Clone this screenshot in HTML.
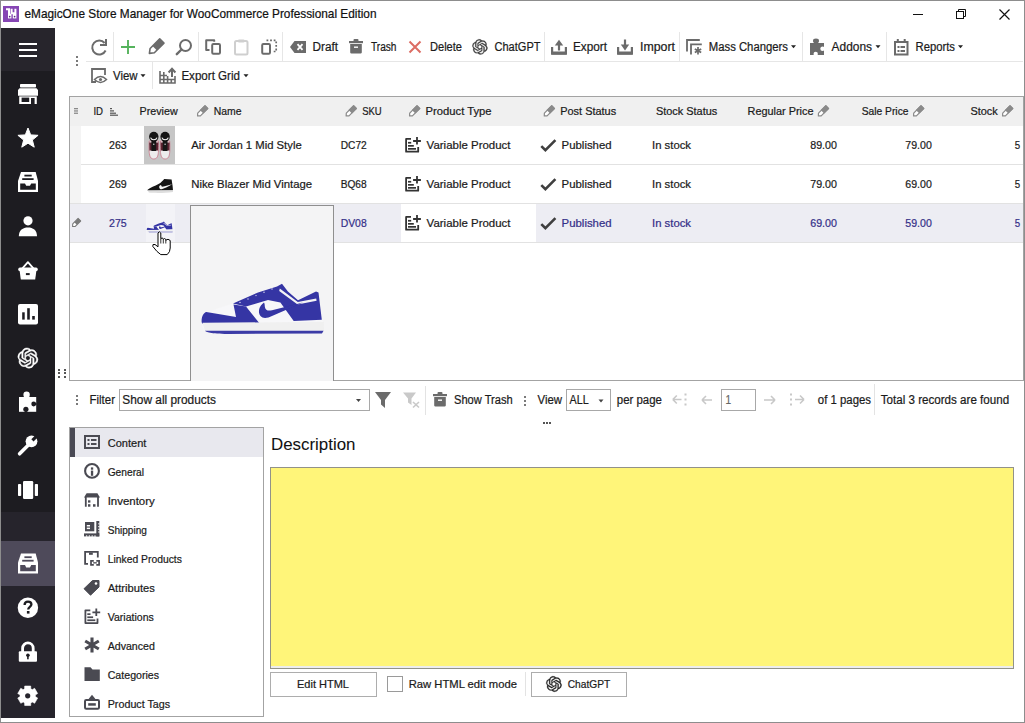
<!DOCTYPE html>
<html><head><meta charset="utf-8"><title>eMagicOne Store Manager</title>
<style>
html,body{margin:0;padding:0;width:1025px;height:723px;overflow:hidden;background:#fff}
body{position:relative;font-family:"Liberation Sans", sans-serif}
svg text{font-family:"Liberation Sans", sans-serif}
</style></head><body>
<div style="position:absolute;left:0px;top:0px;width:1025px;height:723px;background:#ffffff;"></div>
<div style="position:absolute;left:1px;top:28px;width:54px;height:690px;background:#1d1c21;"></div>
<div style="position:absolute;left:1px;top:28px;width:54px;height:43px;background:#27252c;"></div>
<div style="position:absolute;left:1px;top:512px;width:54px;height:206px;background:#26242c;"></div>
<div style="position:absolute;left:1px;top:541px;width:54px;height:45px;background:#4e4a5a;"></div>
<div style="position:absolute;left:0px;top:0px;width:1025px;height:1px;background:#8d8d8d;"></div>
<div style="position:absolute;left:0px;top:0px;width:1px;height:723px;background:#8d8d8d;"></div>
<div style="position:absolute;left:1024px;top:0px;width:1px;height:723px;background:#8d8d8d;"></div>
<div style="position:absolute;left:0px;top:722px;width:1025px;height:1px;background:#8d8d8d;"></div>
<div style="position:absolute;left:3px;top:6px;width:16px;height:16px;background:#8646b4;"></div>
<div style="position:absolute;left:19px;top:43px;width:18px;height:2px;background:#ffffff;"></div>
<div style="position:absolute;left:19px;top:49px;width:18px;height:2px;background:#ffffff;"></div>
<div style="position:absolute;left:19px;top:55px;width:18px;height:2px;background:#ffffff;"></div>
<div style="position:absolute;left:76px;top:56px;width:2px;height:2px;background:#7a7a7a;"></div>
<div style="position:absolute;left:76px;top:60px;width:2px;height:2px;background:#7a7a7a;"></div>
<div style="position:absolute;left:76px;top:64px;width:2px;height:2px;background:#7a7a7a;"></div>
<div style="position:absolute;left:86px;top:61px;width:937px;height:1px;background:#e6e6e6;"></div>
<div style="position:absolute;left:113px;top:32px;width:1px;height:29px;background:#e6e6e6;"></div>
<div style="position:absolute;left:198px;top:32px;width:1px;height:29px;background:#e6e6e6;"></div>
<div style="position:absolute;left:282px;top:32px;width:1px;height:29px;background:#e6e6e6;"></div>
<div style="position:absolute;left:544px;top:32px;width:1px;height:29px;background:#e6e6e6;"></div>
<div style="position:absolute;left:679px;top:32px;width:1px;height:29px;background:#e6e6e6;"></div>
<div style="position:absolute;left:802px;top:32px;width:1px;height:29px;background:#e6e6e6;"></div>
<div style="position:absolute;left:886px;top:32px;width:1px;height:29px;background:#e6e6e6;"></div>
<div style="position:absolute;left:152px;top:62px;width:1px;height:27px;background:#e6e6e6;"></div>
<div style="position:absolute;left:69px;top:96px;width:953px;height:283px;border:1px solid #a3a3a3;background:#ffffff;"></div>
<div style="position:absolute;left:70px;top:97px;width:953px;height:29px;background:#f0f0f0;"></div>
<div style="position:absolute;left:70px;top:126px;width:11px;height:77px;background:#f4f4f4;"></div>
<div style="position:absolute;left:70px;top:204px;width:953px;height:38px;background:#ededf3;"></div>
<div style="position:absolute;left:401px;top:204px;width:135px;height:38px;background:#ffffff;"></div>
<div style="position:absolute;left:81px;top:164px;width:942px;height:1px;background:#e2e2e2;"></div>
<div style="position:absolute;left:70px;top:203px;width:953px;height:1px;background:#e2e2e2;"></div>
<div style="position:absolute;left:70px;top:242px;width:953px;height:1px;background:#e2e2e2;"></div>
<div style="position:absolute;left:144px;top:126px;width:31px;height:38px;background:#c6c6c6;"></div>
<div style="position:absolute;left:146px;top:204px;width:29px;height:38px;background:#f3f3f7;"></div>
<div style="position:absolute;left:190px;top:205px;width:144px;height:176px;background:#8f8f8f;"></div>
<div style="position:absolute;left:191px;top:206px;width:142px;height:175px;background:#f4f4f5;"></div>
<div style="position:absolute;left:58px;top:369px;width:2px;height:2px;background:#555555;"></div>
<div style="position:absolute;left:58px;top:372px;width:2px;height:2px;background:#555555;"></div>
<div style="position:absolute;left:58px;top:376px;width:2px;height:2px;background:#555555;"></div>
<div style="position:absolute;left:64px;top:369px;width:2px;height:2px;background:#555555;"></div>
<div style="position:absolute;left:64px;top:372px;width:2px;height:2px;background:#555555;"></div>
<div style="position:absolute;left:64px;top:376px;width:2px;height:2px;background:#555555;"></div>
<div style="position:absolute;left:76px;top:395px;width:2px;height:2px;background:#7a7a7a;"></div>
<div style="position:absolute;left:76px;top:399px;width:2px;height:2px;background:#7a7a7a;"></div>
<div style="position:absolute;left:76px;top:403px;width:2px;height:2px;background:#7a7a7a;"></div>
<div style="position:absolute;left:119px;top:389px;width:249px;height:20px;border:1px solid #a8a8a8;background:#ffffff;"></div>
<div style="position:absolute;left:425px;top:386px;width:1px;height:29px;background:#e3e3e3;"></div>
<div style="position:absolute;left:524px;top:396px;width:2px;height:2px;background:#7a7a7a;"></div>
<div style="position:absolute;left:524px;top:400px;width:2px;height:2px;background:#7a7a7a;"></div>
<div style="position:absolute;left:524px;top:404px;width:2px;height:2px;background:#7a7a7a;"></div>
<div style="position:absolute;left:566px;top:389px;width:43px;height:20px;border:1px solid #a8a8a8;background:#ffffff;"></div>
<div style="position:absolute;left:721px;top:389px;width:33px;height:20px;border:1px solid #a8a8a8;background:#ffffff;"></div>
<div style="position:absolute;left:874px;top:384px;width:1px;height:31px;background:#e3e3e3;"></div>
<div style="position:absolute;left:543px;top:422px;width:2px;height:2px;background:#555555;"></div>
<div style="position:absolute;left:546px;top:422px;width:2px;height:2px;background:#555555;"></div>
<div style="position:absolute;left:549px;top:422px;width:2px;height:2px;background:#555555;"></div>
<div style="position:absolute;left:69px;top:427px;width:193px;height:288px;border:1px solid #a3a3a3;background:#ffffff;"></div>
<div style="position:absolute;left:70px;top:428px;width:193px;height:29px;background:#e8e8ee;"></div>
<div style="position:absolute;left:70px;top:428px;width:5px;height:29px;background:#4a4a55;"></div>
<div style="position:absolute;left:270px;top:467px;width:742px;height:200px;border:1px solid #929288;background:#fff579;"></div>
<div style="position:absolute;left:271px;top:666px;width:742px;height:1.5px;background:#ededed;"></div>
<div style="position:absolute;left:270px;top:672px;width:105px;height:23px;border:1px solid #adadad;background:#ffffff;"></div>
<div style="position:absolute;left:387px;top:676px;width:14px;height:14px;border:1px solid #9a9a9a;background:#ffffff;"></div>
<div style="position:absolute;left:525px;top:672px;width:1px;height:24px;background:#e3e3e3;"></div>
<div style="position:absolute;left:531px;top:672px;width:94px;height:23px;border:1px solid #adadad;background:#ffffff;"></div>
<svg width="1025" height="723" viewBox="0 0 1025 723" style="position:absolute;left:0;top:0">
<g fill="none" stroke="#fff" stroke-width="2" stroke-linecap="butt"><path d="M6 9.2 H9 V14.5"/><path d="M11.6 8.8 V13.2 H15.4 V8.8"/></g><rect x="8" y="13.8" width="3.4" height="4.6" fill="#fff"/><rect x="12.8" y="13.8" width="3.6" height="4.6" fill="#fff"/><circle cx="9.7" cy="16.6" r="0.85" fill="#5a2a80"/><circle cx="14.6" cy="16.6" r="0.85" fill="#5a2a80"/>
<text x="24.5" y="18" font-size="12.1" fill="#111" stroke="#111" stroke-width="0.22" text-anchor="start" textLength="352" lengthAdjust="spacingAndGlyphs" >eMagicOne Store Manager for WooCommerce Professional Edition</text>
<path d="M913 14.5 H923" stroke="#111" stroke-width="1"/>
<g fill="none" stroke="#111" stroke-width="1"><rect x="956.5" y="11.5" width="7" height="7"/><path d="M958.5 11.5 V9.5 H965.5 V16.5 H963.5"/></g>
<path d="M999.5 9.5 L1009.5 19.5 M1009.5 9.5 L999.5 19.5" stroke="#111" stroke-width="1.2"/>
<g fill="#ffffff"><rect x="20" y="84" width="16" height="3.6" rx="0.8"/><path d="M18 90 L19.5 88.3 H36.5 L38 90 V95.8 H18Z"/><path d="M19.2 96.4 H36.8 V104 H19.2Z"/></g><rect x="21.6" y="97.6" width="7.6" height="4.4" fill="#1d1c21"/><rect x="31" y="98" width="3.6" height="6.2" fill="#1d1c21"/>
<polygon points="28.00,128.00 30.70,134.88 38.08,135.32 32.37,140.02 34.23,147.18 28.00,143.20 21.77,147.18 23.63,140.02 17.92,135.32 25.30,134.88" fill="#ffffff" stroke="#ffffff" stroke-width="1" stroke-linejoin="round"/>
<g><path d="M21 172 H35.7 L38 181 V192 H18 V181Z" fill="#ffffff"/><rect x="24.4" y="174.7" width="7.3" height="1.8" fill="#1d1c21"/><rect x="22.2" y="178.2" width="11.4" height="1.8" fill="#1d1c21"/><path d="M20.2 183.5 H25 L26.2 185.8 H30 L31.2 183.5 H35.8 V189.7 H20.2Z" fill="#1d1c21"/></g>
<circle cx="28" cy="220.8" r="4.6" fill="#ffffff"/><path d="M18.8 236.2 C18.8 230 23 227.4 28 227.4 C33 227.4 37 230 37 236.2Z" fill="#ffffff"/>
<path d="M22.2 268.6 L27.9 262.2 L33.6 268.6" fill="none" stroke="#ffffff" stroke-width="1.8" stroke-linejoin="round"/><rect x="18.2" y="267.6" width="19.6" height="3.6" rx="1.8" fill="#ffffff"/><path d="M19.6 270.5 H36.4 L35.2 279.4 H20.8Z" fill="#ffffff"/><rect x="25.9" y="273.1" width="3.8" height="2" fill="#1d1c21"/>
<rect x="18" y="304" width="20" height="20.5" rx="2" fill="#ffffff"/><rect x="22.2" y="312.3" width="2.5" height="7.3" fill="#1d1c21"/><rect x="27.2" y="308.2" width="2.6" height="11.4" fill="#1d1c21"/><rect x="32.2" y="316" width="2.6" height="3.6" fill="#1d1c21"/>
<path transform="translate(17.80 348.00) scale(0.8417)" d="M22.2819 9.8211a5.9847 5.9847 0 0 0-.5157-4.9108 6.0462 6.0462 0 0 0-6.5098-2.9A6.0651 6.0651 0 0 0 4.9807 4.1818a5.9847 5.9847 0 0 0-3.9977 2.9 6.0462 6.0462 0 0 0 .7427 7.0966 5.98 5.98 0 0 0 .511 4.9107 6.051 6.051 0 0 0 6.5146 2.9001A5.9847 5.9847 0 0 0 13.2599 24a6.0557 6.0557 0 0 0 5.7718-4.2058 5.9894 5.9894 0 0 0 3.9977-2.9001 6.0557 6.0557 0 0 0-.7475-7.0729zm-9.022 12.6081a4.4755 4.4755 0 0 1-2.8764-1.0408l.1419-.0804 4.7783-2.7582a.7948.7948 0 0 0 .3927-.6813v-6.7369l2.02 1.1686a.071.071 0 0 1 .038.052v5.5826a4.504 4.504 0 0 1-4.4945 4.4944zm-9.6607-4.1254a4.4708 4.4708 0 0 1-.5346-3.0137l.142.0852 4.783 2.7582a.7712.7712 0 0 0 .7806 0l5.8428-3.3685v2.3324a.0804.0804 0 0 1-.0332.0615L9.74 19.9502a4.4992 4.4992 0 0 1-6.1408-1.6464zM2.3408 7.8956a4.485 4.485 0 0 1 2.3655-1.9728V11.6a.7664.7664 0 0 0 .3879.6765l5.8144 3.3543-2.0201 1.1685a.0757.0757 0 0 1-.071 0l-4.8303-2.7865A4.504 4.504 0 0 1 2.3408 7.872zm16.5963 3.8558L13.1038 8.364 15.1192 7.2a.0757.0757 0 0 1 .071 0l4.8303 2.7913a4.4944 4.4944 0 0 1-.6765 8.1042v-5.6772a.79.79 0 0 0-.407-.667zm2.0107-3.0231l-.142-.0852-4.7735-2.7818a.7759.7759 0 0 0-.7854 0L9.409 9.2297V6.8974a.0662.0662 0 0 1 .0284-.0615l4.8303-2.7866a4.4992 4.4992 0 0 1 6.6802 4.66zM8.3065 12.863l-2.02-1.1638a.0804.0804 0 0 1-.038-.0567V6.0742a4.4992 4.4992 0 0 1 7.3757-3.4537l-.142.0805L8.704 5.459a.7948.7948 0 0 0-.3927.6813zm1.0976-2.3654l2.602-1.4998 2.6069 1.4998v2.9994l-2.5974 1.5-2.6067-1.5Z" fill="#ffffff" stroke="#ffffff" stroke-width="0.59"/>
<rect x="19" y="397" width="17.2" height="14.8" fill="#ffffff"/><circle cx="26.6" cy="394.8" r="3.2" fill="#ffffff"/><circle cx="33.7" cy="404" r="2.4" fill="#1d1c21"/><rect x="35" y="403.1" width="1.6" height="1.8" fill="#1d1c21"/><circle cx="25.9" cy="409.3" r="2.6" fill="#1d1c21"/><rect x="25" y="410.5" width="1.8" height="1.8" fill="#1d1c21"/>
<path d="M19.6 453.8 L29.4 444" stroke="#ffffff" stroke-width="3.6" stroke-linecap="round"/><circle cx="31.5" cy="441.3" r="5.9" fill="#ffffff"/><rect x="-1.6" y="-4" width="3.2" height="8" fill="#1d1c21" transform="translate(35.3 437.5) rotate(45)"/>
<rect x="23" y="481" width="10.2" height="18" rx="1.2" fill="#ffffff"/><rect x="18" y="484" width="3.2" height="12" rx="0.8" fill="#ffffff"/><rect x="34.8" y="484" width="3.2" height="12" rx="0.8" fill="#ffffff"/>
<g><path d="M21 553.6 H35.7 L38 562.6 V573.6 H18 V562.6Z" fill="#ffffff"/><rect x="24.4" y="556.3000000000001" width="7.3" height="1.8" fill="#4e4a5a"/><rect x="22.2" y="559.8000000000001" width="11.4" height="1.8" fill="#4e4a5a"/><path d="M20.2 565.1 H25 L26.2 567.4 H30 L31.2 565.1 H35.8 V571.3000000000001 H20.2Z" fill="#4e4a5a"/></g>
<circle cx="27.9" cy="607.7" r="10.2" fill="#ffffff"/><path d="M24.6 605 C24.6 602.6 26.2 601.6 28 601.6 C30 601.6 31.4 602.8 31.4 604.6 C31.4 606.8 28.2 607 28.2 609.4" fill="none" stroke="#1d1c21" stroke-width="2.3"/><rect x="26.9" y="611" width="2.6" height="2.6" fill="#1d1c21"/>
<path d="M22.6 652 V648.2 A5.3 5.3 0 0 1 33.2 648.2 V652" fill="none" stroke="#ffffff" stroke-width="2.8"/><rect x="18.8" y="651.2" width="18.2" height="10.5" rx="1" fill="#ffffff"/><circle cx="27.9" cy="655.3" r="1.8" fill="#1d1c21"/><rect x="27.1" y="655.5" width="1.6" height="3.8" fill="#1d1c21"/>
<polygon points="24.60,688.86 24.69,686.06 30.71,686.06 30.80,688.86 32.16,689.65 34.63,688.32 37.65,693.54 35.26,695.01 35.26,696.59 37.65,698.06 34.63,703.28 32.16,701.95 30.80,702.74 30.71,705.54 24.69,705.54 24.60,702.74 23.24,701.95 20.77,703.28 17.75,698.06 20.14,696.59 20.14,695.01 17.75,693.54 20.77,688.32 23.24,689.65" fill="#ffffff" stroke="#ffffff" stroke-width="0.6" stroke-linejoin="round"/><circle cx="27.7" cy="695.8" r="7.6" fill="#ffffff"/><circle cx="27.7" cy="695.8" r="2.6" fill="#26242c"/>
<path d="M104.6 43 A7 7 0 1 0 105.6 50.5" fill="none" stroke="#6b6b6b" stroke-width="2"/><path d="M100 45 H106 V39" fill="none" stroke="#6b6b6b" stroke-width="2"/>
<path d="M121 47 H135 M128 40 V54" stroke="#55b35c" stroke-width="1.9"/>
<g transform="translate(149.4 53.4) rotate(-45)"><path d="M0 0 L4 -3.0 H17.6 V3.0 H4Z" fill="none" stroke="#6b6b6b" stroke-width="1.6" stroke-linejoin="round"/><rect x="7.392" y="-3.0" width="10.208" height="6.0" fill="#6b6b6b"/></g>
<circle cx="185.5" cy="45.5" r="5.5" fill="none" stroke="#6b6b6b" stroke-width="2"/><path d="M181.5 49.5 L176.8 54.2" stroke="#6b6b6b" stroke-width="2.4" stroke-linecap="round"/>
<path d="M209.5 50 H206.2 V40.2 H214.2 V41.8" fill="none" stroke="#6b6b6b" stroke-width="2" stroke-linejoin="round"/><rect x="212.2" y="44" width="7.8" height="9.8" rx="1.2" fill="none" stroke="#6b6b6b" stroke-width="2"/>
<rect x="235" y="41" width="12.5" height="13.5" rx="1.5" fill="none" stroke="#cfcfcf" stroke-width="2"/><rect x="238" y="39.5" width="6.5" height="3" rx="1" fill="#cfcfcf"/>
<rect x="262.2" y="44" width="7.8" height="9.8" rx="1.2" fill="none" stroke="#6b6b6b" stroke-width="2"/><path d="M266.5 40.3 H276.2 V51.5 H272.5" fill="none" stroke="#6b6b6b" stroke-width="1.7" stroke-dasharray="1.8 1.8"/>
<path d="M294.5 41 H306 V53 H294.5 L290 47Z" fill="#6b6b6b"/><path d="M297.5 44.2 L302.5 49.8 M302.5 44.2 L297.5 49.8" stroke="#fff" stroke-width="1.8"/>
<text x="312.5" y="51" font-size="12.3" fill="#1b1b1b" stroke="#1b1b1b" stroke-width="0.22" text-anchor="start" textLength="25.5" lengthAdjust="spacingAndGlyphs" >Draft</text>
<rect x="353.5" y="39" width="5" height="2.5" rx="1" fill="#6b6b6b"/><rect x="349" y="41" width="14" height="2.2" fill="#6b6b6b"/><path d="M350.2 44 H361.8 V52.5 A1.2 1.2 0 0 1 360.6 53.5 H351.4 A1.2 1.2 0 0 1 350.2 52.5Z" fill="#6b6b6b"/><rect x="354" y="46.5" width="4" height="1.4" fill="#fff"/>
<text x="371" y="51" font-size="12.3" fill="#1b1b1b" stroke="#1b1b1b" stroke-width="0.22" text-anchor="start" textLength="25.5" lengthAdjust="spacingAndGlyphs" >Trash</text>
<path d="M409.5 41.5 L420.5 52.5 M420.5 41.5 L409.5 52.5" stroke="#dc6d64" stroke-width="2"/>
<text x="430" y="51" font-size="12.3" fill="#1b1b1b" stroke="#1b1b1b" stroke-width="0.22" text-anchor="start" textLength="32" lengthAdjust="spacingAndGlyphs" >Delete</text>
<path transform="translate(472.30 39.30) scale(0.6333)" d="M22.2819 9.8211a5.9847 5.9847 0 0 0-.5157-4.9108 6.0462 6.0462 0 0 0-6.5098-2.9A6.0651 6.0651 0 0 0 4.9807 4.1818a5.9847 5.9847 0 0 0-3.9977 2.9 6.0462 6.0462 0 0 0 .7427 7.0966 5.98 5.98 0 0 0 .511 4.9107 6.051 6.051 0 0 0 6.5146 2.9001A5.9847 5.9847 0 0 0 13.2599 24a6.0557 6.0557 0 0 0 5.7718-4.2058 5.9894 5.9894 0 0 0 3.9977-2.9001 6.0557 6.0557 0 0 0-.7475-7.0729zm-9.022 12.6081a4.4755 4.4755 0 0 1-2.8764-1.0408l.1419-.0804 4.7783-2.7582a.7948.7948 0 0 0 .3927-.6813v-6.7369l2.02 1.1686a.071.071 0 0 1 .038.052v5.5826a4.504 4.504 0 0 1-4.4945 4.4944zm-9.6607-4.1254a4.4708 4.4708 0 0 1-.5346-3.0137l.142.0852 4.783 2.7582a.7712.7712 0 0 0 .7806 0l5.8428-3.3685v2.3324a.0804.0804 0 0 1-.0332.0615L9.74 19.9502a4.4992 4.4992 0 0 1-6.1408-1.6464zM2.3408 7.8956a4.485 4.485 0 0 1 2.3655-1.9728V11.6a.7664.7664 0 0 0 .3879.6765l5.8144 3.3543-2.0201 1.1685a.0757.0757 0 0 1-.071 0l-4.8303-2.7865A4.504 4.504 0 0 1 2.3408 7.872zm16.5963 3.8558L13.1038 8.364 15.1192 7.2a.0757.0757 0 0 1 .071 0l4.8303 2.7913a4.4944 4.4944 0 0 1-.6765 8.1042v-5.6772a.79.79 0 0 0-.407-.667zm2.0107-3.0231l-.142-.0852-4.7735-2.7818a.7759.7759 0 0 0-.7854 0L9.409 9.2297V6.8974a.0662.0662 0 0 1 .0284-.0615l4.8303-2.7866a4.4992 4.4992 0 0 1 6.6802 4.66zM8.3065 12.863l-2.02-1.1638a.0804.0804 0 0 1-.038-.0567V6.0742a4.4992 4.4992 0 0 1 7.3757-3.4537l-.142.0805L8.704 5.459a.7948.7948 0 0 0-.3927.6813zm1.0976-2.3654l2.602-1.4998 2.6069 1.4998v2.9994l-2.5974 1.5-2.6067-1.5Z" fill="#383838" stroke="#383838" stroke-width="0.47"/>
<text x="494.5" y="51" font-size="12.3" fill="#1b1b1b" stroke="#1b1b1b" stroke-width="0.22" text-anchor="start" textLength="46" lengthAdjust="spacingAndGlyphs" >ChatGPT</text>
<path d="M552.1 47.0 V53.5 H565.9 V47.0" fill="none" stroke="#6b6b6b" stroke-width="2.2"/><rect x="551" y="51.5" width="16" height="3.2" rx="1" fill="#6b6b6b"/><path d="M559 44 V50.5" stroke="#6b6b6b" stroke-width="2.2"/><path d="M554.8 45.6 L559 39.8 L563.2 45.6Z" fill="#6b6b6b"/>
<text x="573" y="51" font-size="12.3" fill="#1b1b1b" stroke="#1b1b1b" stroke-width="0.22" text-anchor="start" textLength="34" lengthAdjust="spacingAndGlyphs" >Export</text>
<path d="M618.1 47.0 V53.5 H631.9 V47.0" fill="none" stroke="#6b6b6b" stroke-width="2.2"/><rect x="617" y="51.5" width="16" height="3.2" rx="1" fill="#6b6b6b"/><path d="M625 39.5 V46" stroke="#6b6b6b" stroke-width="2.2"/><path d="M620.8 44.6 L625 50.4 L629.2 44.6Z" fill="#6b6b6b"/>
<text x="640" y="51" font-size="12.3" fill="#1b1b1b" stroke="#1b1b1b" stroke-width="0.22" text-anchor="start" textLength="35" lengthAdjust="spacingAndGlyphs" >Import</text>
<path d="M687 51.5 V40 H699.8" fill="none" stroke="#6b6b6b" stroke-width="1.8"/><path d="M691 54.5 V44.3 H701.8" fill="none" stroke="#6b6b6b" stroke-width="1.8"/><g stroke="#6b6b6b" stroke-width="1.7"><path d="M698 47 V54.5 M694.8 48.9 L701.2 52.4 M701.2 48.9 L694.8 52.4"/></g>
<text x="708.8" y="51" font-size="12.3" fill="#1b1b1b" stroke="#1b1b1b" stroke-width="0.22" text-anchor="start" textLength="79.2" lengthAdjust="spacingAndGlyphs" >Mass Changers</text>
<path d="M791 45.3 H796 L793.5 48.3Z" fill="#222"/>
<rect x="810" y="43" width="14" height="12" fill="#6b6b6b"/><ellipse cx="816" cy="41" rx="3" ry="2.4" fill="#6b6b6b"/><rect x="814.8" y="42" width="2.4" height="2" fill="#6b6b6b"/><circle cx="822.6" cy="48.8" r="2.3" fill="#fff"/><circle cx="815.7" cy="54" r="2.2" fill="#fff"/>
<text x="831.6" y="51" font-size="12.3" fill="#1b1b1b" stroke="#1b1b1b" stroke-width="0.22" text-anchor="start" textLength="40.4" lengthAdjust="spacingAndGlyphs" >Addons</text>
<path d="M875.5 45.3 H880.5 L878.0 48.3Z" fill="#222"/>
<rect x="895" y="42" width="12.5" height="12.5" fill="none" stroke="#6b6b6b" stroke-width="2"/><path d="M897.8 39 V43 M904.7 39 V43" stroke="#6b6b6b" stroke-width="2"/><g fill="#6b6b6b"><rect x="897.5" y="46" width="2" height="2"/><rect x="900.5" y="46" width="4.5" height="2"/><rect x="897.5" y="50" width="2" height="2"/><rect x="900.5" y="50" width="4.5" height="2"/></g>
<text x="915.5" y="51" font-size="12.3" fill="#1b1b1b" stroke="#1b1b1b" stroke-width="0.22" text-anchor="start" textLength="39.5" lengthAdjust="spacingAndGlyphs" >Reports</text>
<path d="M958 45.3 H963 L960.5 48.3Z" fill="#222"/>
<path d="M96 82 H92 V69 H105 V75" fill="none" stroke="#6b6b6b" stroke-width="1.8"/><path d="M94.5 79.5 Q100.5 73.5 106.5 79.5 Q100.5 85.5 94.5 79.5Z" fill="#fff" stroke="#6b6b6b" stroke-width="1.5"/><circle cx="100.5" cy="79.5" r="1.6" fill="#6b6b6b"/>
<text x="113" y="80" font-size="12.3" fill="#1b1b1b" stroke="#1b1b1b" stroke-width="0.22" text-anchor="start" textLength="24.5" lengthAdjust="spacingAndGlyphs" >View</text>
<path d="M140.5 74.3 H145.5 L143.0 77.3Z" fill="#222"/>
<g fill="none" stroke="#6b6b6b" stroke-width="1.6"><path d="M160 71 V83 H175 V76"/><path d="M160 75.5 H167 M160 79.5 H175 M163.8 72 V83 M167.6 76 V83 M171.3 79.5 V83"/></g><path d="M172 77 V69.5" stroke="#6b6b6b" stroke-width="2"/><path d="M168.6 72.5 L172 68.8 L175.4 72.5" fill="none" stroke="#6b6b6b" stroke-width="2"/>
<text x="181.4" y="80" font-size="12.3" fill="#1b1b1b" stroke="#1b1b1b" stroke-width="0.22" text-anchor="start" textLength="58.6" lengthAdjust="spacingAndGlyphs" >Export Grid</text>
<path d="M243.5 74.3 H248.5 L246.0 77.3Z" fill="#222"/>
<g fill="#8a8a8a"><rect x="74" y="108" width="4" height="1.3"/><rect x="74" y="110.3" width="4" height="1.3"/><rect x="74" y="112.6" width="4" height="1.3"/></g>
<text x="93.4" y="115" font-size="11.2" fill="#1b1b1b" stroke="#1b1b1b" stroke-width="0.22" text-anchor="start" textLength="9.6" lengthAdjust="spacingAndGlyphs" >ID</text>
<g fill="#555"><rect x="110" y="108" width="2" height="1.2"/><rect x="110" y="110.3" width="4" height="1.2"/><rect x="110" y="112.6" width="6" height="1.2"/><rect x="110" y="114.6" width="8" height="1.2"/></g>
<text x="139.6" y="115" font-size="11.2" fill="#1b1b1b" stroke="#1b1b1b" stroke-width="0.22" text-anchor="start" textLength="38.1" lengthAdjust="spacingAndGlyphs" >Preview</text>
<g transform="translate(197.2 116.3) rotate(-45)"><path d="M0.5 0 L2.6 -1.9 H13 V1.9 H2.6Z" fill="#fff" stroke="#8a8a8a" stroke-width="1.2" stroke-linejoin="round"/><rect x="6.3" y="-2.5" width="7.2" height="5" fill="#8a8a8a"/></g>
<text x="213.7" y="115" font-size="11.2" fill="#1b1b1b" stroke="#1b1b1b" stroke-width="0.22" text-anchor="start" textLength="27.8" lengthAdjust="spacingAndGlyphs" >Name</text>
<g transform="translate(345.8 116.3) rotate(-45)"><path d="M0.5 0 L2.6 -1.9 H13 V1.9 H2.6Z" fill="#fff" stroke="#8a8a8a" stroke-width="1.2" stroke-linejoin="round"/><rect x="6.3" y="-2.5" width="7.2" height="5" fill="#8a8a8a"/></g>
<text x="362.2" y="115" font-size="11.2" fill="#1b1b1b" stroke="#1b1b1b" stroke-width="0.22" text-anchor="start" textLength="19.5" lengthAdjust="spacingAndGlyphs" >SKU</text>
<g transform="translate(409.2 116.3) rotate(-45)"><path d="M0.5 0 L2.6 -1.9 H13 V1.9 H2.6Z" fill="#fff" stroke="#8a8a8a" stroke-width="1.2" stroke-linejoin="round"/><rect x="6.3" y="-2.5" width="7.2" height="5" fill="#8a8a8a"/></g>
<text x="425.6" y="115" font-size="11.2" fill="#1b1b1b" stroke="#1b1b1b" stroke-width="0.22" text-anchor="start" textLength="66" lengthAdjust="spacingAndGlyphs" >Product Type</text>
<g transform="translate(543.9000000000001 116.3) rotate(-45)"><path d="M0.5 0 L2.6 -1.9 H13 V1.9 H2.6Z" fill="#fff" stroke="#8a8a8a" stroke-width="1.2" stroke-linejoin="round"/><rect x="6.3" y="-2.5" width="7.2" height="5" fill="#8a8a8a"/></g>
<text x="560.2" y="115" font-size="11.2" fill="#1b1b1b" stroke="#1b1b1b" stroke-width="0.22" text-anchor="start" textLength="56" lengthAdjust="spacingAndGlyphs" >Post Status</text>
<text x="655.9" y="115" font-size="11.2" fill="#1b1b1b" stroke="#1b1b1b" stroke-width="0.22" text-anchor="start" textLength="61.4" lengthAdjust="spacingAndGlyphs" >Stock Status</text>
<text x="747.6" y="115" font-size="11.2" fill="#1b1b1b" stroke="#1b1b1b" stroke-width="0.22" text-anchor="start" textLength="65.9" lengthAdjust="spacingAndGlyphs" >Regular Price</text>
<g transform="translate(818.0 116.3) rotate(-45)"><path d="M0.5 0 L2.6 -1.9 H13 V1.9 H2.6Z" fill="#fff" stroke="#8a8a8a" stroke-width="1.2" stroke-linejoin="round"/><rect x="6.3" y="-2.5" width="7.2" height="5" fill="#8a8a8a"/></g>
<text x="861.7" y="115" font-size="11.2" fill="#1b1b1b" stroke="#1b1b1b" stroke-width="0.22" text-anchor="start" textLength="46.8" lengthAdjust="spacingAndGlyphs" >Sale Price</text>
<g transform="translate(913.2 116.3) rotate(-45)"><path d="M0.5 0 L2.6 -1.9 H13 V1.9 H2.6Z" fill="#fff" stroke="#8a8a8a" stroke-width="1.2" stroke-linejoin="round"/><rect x="6.3" y="-2.5" width="7.2" height="5" fill="#8a8a8a"/></g>
<text x="970.4" y="115" font-size="11.2" fill="#1b1b1b" stroke="#1b1b1b" stroke-width="0.22" text-anchor="start" textLength="27.4" lengthAdjust="spacingAndGlyphs" >Stock</text>
<g transform="translate(1002.2 116.3) rotate(-45)"><path d="M0.5 0 L2.6 -1.9 H13 V1.9 H2.6Z" fill="#fff" stroke="#8a8a8a" stroke-width="1.2" stroke-linejoin="round"/><rect x="6.3" y="-2.5" width="7.2" height="5" fill="#8a8a8a"/></g>
<text x="126.7" y="149" font-size="11.4" fill="#1b1b1b" stroke="#1b1b1b" stroke-width="0.22" text-anchor="end" textLength="17.7" lengthAdjust="spacingAndGlyphs" >263</text>
<text x="191.2" y="149" font-size="11.4" fill="#1b1b1b" stroke="#1b1b1b" stroke-width="0.22" text-anchor="start" textLength="110.5" lengthAdjust="spacingAndGlyphs" >Air Jordan 1 Mid Style</text>
<text x="340.7" y="149" font-size="11.4" fill="#1b1b1b" stroke="#1b1b1b" stroke-width="0.22" text-anchor="start" textLength="26" lengthAdjust="spacingAndGlyphs" >DC72</text>
<g fill="none" stroke="#333333" stroke-width="1.8" stroke-linejoin="round"><path d="M411 138.9 H406.1 V151.70000000000002 H418.2 V147.10000000000002"/><path d="M417 137.0 V144.60000000000002 M413.1 141.0 H420.9"/></g><g fill="#333333"><rect x="408" y="141.9" width="3.2" height="1.7"/><rect x="408" y="145.0" width="5.8" height="1.7"/><rect x="408" y="148.0" width="8" height="1.7"/></g>
<text x="426.6" y="149" font-size="11.4" fill="#1b1b1b" stroke="#1b1b1b" stroke-width="0.22" text-anchor="start" textLength="83.9" lengthAdjust="spacingAndGlyphs" >Variable Product</text>
<path d="M541.3 146.1 L545.4 150.2 L555.4 140.2" fill="none" stroke="#3f3f3f" stroke-width="2.6"/>
<text x="561.6" y="149" font-size="11.4" fill="#1b1b1b" stroke="#1b1b1b" stroke-width="0.22" text-anchor="start" textLength="50" lengthAdjust="spacingAndGlyphs" >Published</text>
<text x="652" y="149" font-size="11.4" fill="#1b1b1b" stroke="#1b1b1b" stroke-width="0.22" text-anchor="start" textLength="39" lengthAdjust="spacingAndGlyphs" >In stock</text>
<text x="837" y="149" font-size="11.4" fill="#1b1b1b" stroke="#1b1b1b" stroke-width="0.22" text-anchor="end" textLength="26.8" lengthAdjust="spacingAndGlyphs" >89.00</text>
<text x="931.8" y="149" font-size="11.4" fill="#1b1b1b" stroke="#1b1b1b" stroke-width="0.22" text-anchor="end" textLength="26.5" lengthAdjust="spacingAndGlyphs" >79.00</text>
<text x="1020.2" y="149" font-size="11.4" fill="#1b1b1b" stroke="#1b1b1b" stroke-width="0.22" text-anchor="end" textLength="5.4" lengthAdjust="spacingAndGlyphs" >5</text>
<text x="126.7" y="188" font-size="11.4" fill="#1b1b1b" stroke="#1b1b1b" stroke-width="0.22" text-anchor="end" textLength="17.7" lengthAdjust="spacingAndGlyphs" >269</text>
<text x="191.2" y="188" font-size="11.4" fill="#1b1b1b" stroke="#1b1b1b" stroke-width="0.22" text-anchor="start" textLength="121" lengthAdjust="spacingAndGlyphs" >Nike Blazer Mid Vintage</text>
<text x="340.7" y="188" font-size="11.4" fill="#1b1b1b" stroke="#1b1b1b" stroke-width="0.22" text-anchor="start" textLength="26" lengthAdjust="spacingAndGlyphs" >BQ68</text>
<g fill="none" stroke="#333333" stroke-width="1.8" stroke-linejoin="round"><path d="M411 177.9 H406.1 V190.70000000000002 H418.2 V186.10000000000002"/><path d="M417 176.0 V183.60000000000002 M413.1 180.0 H420.9"/></g><g fill="#333333"><rect x="408" y="180.9" width="3.2" height="1.7"/><rect x="408" y="184.0" width="5.8" height="1.7"/><rect x="408" y="187.0" width="8" height="1.7"/></g>
<text x="426.6" y="188" font-size="11.4" fill="#1b1b1b" stroke="#1b1b1b" stroke-width="0.22" text-anchor="start" textLength="83.9" lengthAdjust="spacingAndGlyphs" >Variable Product</text>
<path d="M541.3 185.1 L545.4 189.2 L555.4 179.2" fill="none" stroke="#3f3f3f" stroke-width="2.6"/>
<text x="561.6" y="188" font-size="11.4" fill="#1b1b1b" stroke="#1b1b1b" stroke-width="0.22" text-anchor="start" textLength="50" lengthAdjust="spacingAndGlyphs" >Published</text>
<text x="652" y="188" font-size="11.4" fill="#1b1b1b" stroke="#1b1b1b" stroke-width="0.22" text-anchor="start" textLength="39" lengthAdjust="spacingAndGlyphs" >In stock</text>
<text x="837" y="188" font-size="11.4" fill="#1b1b1b" stroke="#1b1b1b" stroke-width="0.22" text-anchor="end" textLength="26.8" lengthAdjust="spacingAndGlyphs" >79.00</text>
<text x="931.8" y="188" font-size="11.4" fill="#1b1b1b" stroke="#1b1b1b" stroke-width="0.22" text-anchor="end" textLength="26.5" lengthAdjust="spacingAndGlyphs" >69.00</text>
<text x="1020.2" y="188" font-size="11.4" fill="#1b1b1b" stroke="#1b1b1b" stroke-width="0.22" text-anchor="end" textLength="5.4" lengthAdjust="spacingAndGlyphs" >5</text>
<text x="126.7" y="227" font-size="11.4" fill="#342f88" stroke="#342f88" stroke-width="0.22" text-anchor="end" textLength="17.7" lengthAdjust="spacingAndGlyphs" >275</text>
<text x="340.7" y="227" font-size="11.4" fill="#342f88" stroke="#342f88" stroke-width="0.22" text-anchor="start" textLength="26" lengthAdjust="spacingAndGlyphs" >DV08</text>
<g fill="none" stroke="#333333" stroke-width="1.8" stroke-linejoin="round"><path d="M411 216.9 H406.1 V229.70000000000002 H418.2 V225.10000000000002"/><path d="M417 215.0 V222.60000000000002 M413.1 219.0 H420.9"/></g><g fill="#333333"><rect x="408" y="219.9" width="3.2" height="1.7"/><rect x="408" y="223.0" width="5.8" height="1.7"/><rect x="408" y="226.0" width="8" height="1.7"/></g>
<text x="426.6" y="227" font-size="11.4" fill="#1b1b1b" stroke="#1b1b1b" stroke-width="0.22" text-anchor="start" textLength="83.9" lengthAdjust="spacingAndGlyphs" >Variable Product</text>
<path d="M541.3 224.1 L545.4 228.2 L555.4 218.2" fill="none" stroke="#3f3f3f" stroke-width="2.6"/>
<text x="561.6" y="227" font-size="11.4" fill="#342f88" stroke="#342f88" stroke-width="0.22" text-anchor="start" textLength="50" lengthAdjust="spacingAndGlyphs" >Published</text>
<text x="652" y="227" font-size="11.4" fill="#342f88" stroke="#342f88" stroke-width="0.22" text-anchor="start" textLength="39" lengthAdjust="spacingAndGlyphs" >In stock</text>
<text x="837" y="227" font-size="11.4" fill="#342f88" stroke="#342f88" stroke-width="0.22" text-anchor="end" textLength="26.8" lengthAdjust="spacingAndGlyphs" >69.00</text>
<text x="931.8" y="227" font-size="11.4" fill="#342f88" stroke="#342f88" stroke-width="0.22" text-anchor="end" textLength="26.5" lengthAdjust="spacingAndGlyphs" >59.00</text>
<text x="1020.2" y="227" font-size="11.4" fill="#342f88" stroke="#342f88" stroke-width="0.22" text-anchor="end" textLength="5.4" lengthAdjust="spacingAndGlyphs" >5</text>
<g transform="translate(72.3 226.8) rotate(-45)"><path d="M0.4 0 L2.4 -1.8 H10 V1.8 H2.4Z" fill="#fff" stroke="#7a7a7a" stroke-width="1.1" stroke-linejoin="round"/><rect x="4.6" y="-1.8" width="5.4" height="3.6" fill="#7a7a7a"/></g>
<g transform="translate(153.8 0) scale(1 1)"><path d="M-4.6 141 C-5 148 -4.8 152 -4.2 155 C-3.6 158 -2 159 0 159 C2 159 3.6 158 4.2 155 C4.8 152 5 148 4.6 141Z" fill="#ececec" stroke="#c9798a" stroke-width="0.8"/><path d="M-4.6 142.5 L-4.4 150.5 L4.4 150.5 L4.6 142.5Z" fill="#5e2432"/><rect x="-2.4" y="140" width="4.8" height="11" fill="#161616"/><circle cx="0" cy="144.2" r="0.7" fill="#ddd"/><ellipse cx="0" cy="136.8" rx="4.7" ry="5" fill="#141414"/><path d="M-3.2 137.6 A3.3 2.9 0 0 0 3.2 137.6" fill="none" stroke="#f0f0f0" stroke-width="1.1"/></g><g transform="translate(165.1 0) scale(-1 1)"><path d="M-4.6 141 C-5 148 -4.8 152 -4.2 155 C-3.6 158 -2 159 0 159 C2 159 3.6 158 4.2 155 C4.8 152 5 148 4.6 141Z" fill="#ececec" stroke="#c9798a" stroke-width="0.8"/><path d="M-4.6 142.5 L-4.4 150.5 L4.4 150.5 L4.6 142.5Z" fill="#5e2432"/><rect x="-2.4" y="140" width="4.8" height="11" fill="#161616"/><circle cx="0" cy="144.2" r="0.7" fill="#ddd"/><ellipse cx="0" cy="136.8" rx="4.7" ry="5" fill="#141414"/><path d="M-3.2 137.6 A3.3 2.9 0 0 0 3.2 137.6" fill="none" stroke="#f0f0f0" stroke-width="1.1"/></g>
<path d="M147.6 189.8 C150 187.5 155 186 158.5 184 C161 182.5 163 180.5 164.2 178.9 L171.6 179.6 L172.6 186 L173 190.2 L147.6 190.6Z" fill="#151515"/><path d="M147.8 190.4 H173 V192 C165 193.2 155 193.2 148.8 192.6Z" fill="#dedede"/><path d="M159.4 188 C158.6 186.6 159.6 185.2 161.2 185 C161 186.4 162 187 163.6 186.6 L172.2 184.2 C168 186.6 164 188.6 161.6 189.2 C160.6 189.4 159.8 188.9 159.4 188Z" fill="#f6f6f6"/>
<g transform="translate(103.604 160.923) scale(0.2139)"><path d="M201.5 321 C201 316 204 312.5 207 312 L233 303.5 L258 292.4 L277 286.6 L282 283.7 L288 291.6 L298 300.3 L316 291.6 L318.5 292.4 L321.8 319.8 L323.8 322 L324 330 L322 334 L228 334 L205 331 C202 328 201.5 324 201.5 321Z" fill="#f7f7f9"/><path d="M233 303.5 L258 292.4 L277 286.6 L282 283.7 L287.9 291.6 L298 300.3 L316 291.6 L318.5 292.4 L321.8 319.8 L293.7 321 L280.4 302.4 L268 300 L246 306.6 Z" fill="#3434a4"/><path d="M279.8 288.6 L297.8 302 L316.2 298.6 L316.6 300.8 L297.6 304.6 L279.2 291Z" fill="#f3f3f5"/><path d="M201.6 321.5 C201.5 316 204 312.5 206.3 312 L236 317 L233.5 304.5 L246 306.6 L260 324 L202 323.5Z" fill="#3434a4"/><path d="M264 302.5 C259 306 257.5 312 260.5 316 C262.8 318.8 267.5 318.2 272 316 L303 302.5 L272 310.2 C268 311.2 265.5 310.2 265 307.5 C264.6 305.8 265 304 264 302.5Z" fill="#3434a4"/><path d="M202.5 322.8 L323.8 321.8 L324 331 L205 331Z" fill="#f0f0f0"/><path d="M204.5 330.2 C206.5 332.4 210 333.6 228 333.9 L322 333.6 L323.6 330.8 L205 330.8Z" fill="#3a3aa6"/><g fill="#dcdcf0"><circle cx="240" cy="302.5" r="0.7"/><circle cx="248" cy="299" r="0.7"/><circle cx="256" cy="295.6" r="0.7"/><circle cx="264" cy="292.2" r="0.7"/><circle cx="272" cy="289" r="0.7"/></g></g>
<defs><filter id="soft" x="-5%" y="-5%" width="110%" height="110%"><feGaussianBlur stdDeviation="0.35"/></filter></defs><g filter="url(#soft)"><path d="M201.5 321 C201 316 204 312.5 207 312 L233 303.5 L258 292.4 L277 286.6 L282 283.7 L288 291.6 L298 300.3 L316 291.6 L318.5 292.4 L321.8 319.8 L323.8 322 L324 330 L322 334 L228 334 L205 331 C202 328 201.5 324 201.5 321Z" fill="#f7f7f9"/><path d="M233 303.5 L258 292.4 L277 286.6 L282 283.7 L287.9 291.6 L298 300.3 L316 291.6 L318.5 292.4 L321.8 319.8 L293.7 321 L280.4 302.4 L268 300 L246 306.6 Z" fill="#3434a4"/><path d="M279.8 288.6 L297.8 302 L316.2 298.6 L316.6 300.8 L297.6 304.6 L279.2 291Z" fill="#f3f3f5"/><path d="M201.6 321.5 C201.5 316 204 312.5 206.3 312 L236 317 L233.5 304.5 L246 306.6 L260 324 L202 323.5Z" fill="#3434a4"/><path d="M264 302.5 C259 306 257.5 312 260.5 316 C262.8 318.8 267.5 318.2 272 316 L303 302.5 L272 310.2 C268 311.2 265.5 310.2 265 307.5 C264.6 305.8 265 304 264 302.5Z" fill="#3434a4"/><path d="M202.5 322.8 L323.8 321.8 L324 331 L205 331Z" fill="#f0f0f0"/><path d="M204.5 330.2 C206.5 332.4 210 333.6 228 333.9 L322 333.6 L323.6 330.8 L205 330.8Z" fill="#3a3aa6"/><g fill="#dcdcf0"><circle cx="240" cy="302.5" r="0.7"/><circle cx="248" cy="299" r="0.7"/><circle cx="256" cy="295.6" r="0.7"/><circle cx="264" cy="292.2" r="0.7"/><circle cx="272" cy="289" r="0.7"/></g></g>
<g fill="#fff" stroke="#000" stroke-width="1" stroke-linejoin="round"><path d="M158 233 Q159.3 230.6 160.8 233 V238.8 Q162 236.9 163.3 238.8 V239.4 Q164.5 237.7 165.8 239.4 V240.2 Q168 238.2 170.2 240.5 V248 Q170.2 252 167.2 254.6 H160.8 Q157 252.2 152.8 246.4 Q152.2 243.6 155 244.5 L158 246.8 Z"/></g><path d="M160.8 239 V243.5 M163.3 239.5 V243.5 M165.8 240 V243.5" stroke="#000" stroke-width="0.8"/>
<text x="89.5" y="404" font-size="12.3" fill="#1b1b1b" stroke="#1b1b1b" stroke-width="0.22" text-anchor="start" textLength="25.5" lengthAdjust="spacingAndGlyphs" >Filter</text>
<text x="122.3" y="404" font-size="12.3" fill="#1b1b1b" stroke="#1b1b1b" stroke-width="0.22" text-anchor="start" textLength="93.7" lengthAdjust="spacingAndGlyphs" >Show all products</text>
<path d="M356 399 H361 L358.5 402Z" fill="#444"/>
<path d="M375 392 H391 L385 400 V408 L381 404.5 V400Z" fill="#6b6b6b"/>
<path d="M403 392.5 H416 L411.5 398.5 V405 L408 402.5 V398.5Z" fill="#c9c9c9"/><path d="M413 402 L419 407.5 M419 402 L413 407.5" stroke="#c9c9c9" stroke-width="1.6"/>
<rect x="437.5" y="392" width="5" height="2.5" rx="1" fill="#6b6b6b"/><rect x="433" y="394" width="14" height="2.2" fill="#6b6b6b"/><path d="M434.2 397 H445.8 V405.5 A1.2 1.2 0 0 1 444.6 406.5 H435.4 A1.2 1.2 0 0 1 434.2 405.5Z" fill="#6b6b6b"/><rect x="438" y="399.5" width="4" height="1.4" fill="#fff"/>
<text x="454" y="404" font-size="12.3" fill="#1b1b1b" stroke="#1b1b1b" stroke-width="0.22" text-anchor="start" textLength="58.7" lengthAdjust="spacingAndGlyphs" >Show Trash</text>
<text x="537.5" y="404" font-size="12.3" fill="#1b1b1b" stroke="#1b1b1b" stroke-width="0.22" text-anchor="start" textLength="24.5" lengthAdjust="spacingAndGlyphs" >View</text>
<text x="569.6" y="404" font-size="12.3" fill="#1b1b1b" stroke="#1b1b1b" stroke-width="0.22" text-anchor="start" textLength="19.1" lengthAdjust="spacingAndGlyphs" >ALL</text>
<path d="M598.5 399.5 H603.5 L601.0 402.5Z" fill="#444"/>
<text x="616.8" y="404" font-size="12.3" fill="#1b1b1b" stroke="#1b1b1b" stroke-width="0.22" text-anchor="start" textLength="45.1" lengthAdjust="spacingAndGlyphs" >per page</text>
<path d="M672.8 399.5 H681.5 M672.8 399.5 L676.8 395.5 M672.8 399.5 L676.8 403.5" stroke="#c8c8c8" stroke-width="1.6" fill="none"/><g fill="#c8c8c8"><rect x="684.5" y="393.5" width="2" height="2"/><rect x="684.5" y="398.5" width="2" height="2"/><rect x="684.5" y="403.5" width="2" height="2"/></g>
<path d="M702 400 H712 M702 400 L706 396 M702 400 L706 404" stroke="#c8c8c8" stroke-width="1.6" fill="none"/>
<text x="725.6" y="404" font-size="12.3" fill="#666" stroke="#666" stroke-width="0.22" text-anchor="start" textLength="5.6" lengthAdjust="spacingAndGlyphs" >1</text>
<path d="M764 400 H775 M775 400 L771 396 M775 400 L771 404" stroke="#c8c8c8" stroke-width="1.6" fill="none"/>
<path d="M795 399.5 H804 M804 399.5 L800 395.5 M804 399.5 L800 403.5" stroke="#c8c8c8" stroke-width="1.6" fill="none"/><g fill="#c8c8c8"><rect x="790" y="393.5" width="2" height="2"/><rect x="790" y="398.5" width="2" height="2"/><rect x="790" y="403.5" width="2" height="2"/></g>
<text x="817.8" y="404" font-size="12.3" fill="#1b1b1b" stroke="#1b1b1b" stroke-width="0.22" text-anchor="start" textLength="53.2" lengthAdjust="spacingAndGlyphs" >of 1 pages</text>
<text x="880.7" y="404" font-size="12.3" fill="#1b1b1b" stroke="#1b1b1b" stroke-width="0.22" text-anchor="start" textLength="128.5" lengthAdjust="spacingAndGlyphs" >Total 3 records are found</text>
<text x="107.7" y="447" font-size="11.2" fill="#1b1b1b" stroke="#1b1b1b" stroke-width="0.22" text-anchor="start" textLength="38.7" lengthAdjust="spacingAndGlyphs" >Content</text>
<text x="107.7" y="476" font-size="11.2" fill="#1b1b1b" stroke="#1b1b1b" stroke-width="0.22" text-anchor="start" textLength="36.3" lengthAdjust="spacingAndGlyphs" >General</text>
<text x="107.7" y="505" font-size="11.2" fill="#1b1b1b" stroke="#1b1b1b" stroke-width="0.22" text-anchor="start" textLength="47.1" lengthAdjust="spacingAndGlyphs" >Inventory</text>
<text x="107.7" y="534" font-size="11.2" fill="#1b1b1b" stroke="#1b1b1b" stroke-width="0.22" text-anchor="start" textLength="39.2" lengthAdjust="spacingAndGlyphs" >Shipping</text>
<text x="107.7" y="563" font-size="11.2" fill="#1b1b1b" stroke="#1b1b1b" stroke-width="0.22" text-anchor="start" textLength="74.2" lengthAdjust="spacingAndGlyphs" >Linked Products</text>
<text x="107.7" y="592" font-size="11.2" fill="#1b1b1b" stroke="#1b1b1b" stroke-width="0.22" text-anchor="start" textLength="47.1" lengthAdjust="spacingAndGlyphs" >Attributes</text>
<text x="107.7" y="621" font-size="11.2" fill="#1b1b1b" stroke="#1b1b1b" stroke-width="0.22" text-anchor="start" textLength="46.1" lengthAdjust="spacingAndGlyphs" >Variations</text>
<text x="107.7" y="650" font-size="11.2" fill="#1b1b1b" stroke="#1b1b1b" stroke-width="0.22" text-anchor="start" textLength="47.2" lengthAdjust="spacingAndGlyphs" >Advanced</text>
<text x="107.7" y="679" font-size="11.2" fill="#1b1b1b" stroke="#1b1b1b" stroke-width="0.22" text-anchor="start" textLength="51.4" lengthAdjust="spacingAndGlyphs" >Categories</text>
<text x="107.7" y="708" font-size="11.2" fill="#1b1b1b" stroke="#1b1b1b" stroke-width="0.22" text-anchor="start" textLength="62.5" lengthAdjust="spacingAndGlyphs" >Product Tags</text>
<rect x="85" y="436" width="14" height="12" fill="none" stroke="#4a4a52" stroke-width="2"/><g fill="#4a4a52"><rect x="87.5" y="439" width="2" height="2"/><rect x="91" y="439" width="5.5" height="2"/><rect x="87.5" y="443" width="2" height="2"/><rect x="91" y="443" width="5.5" height="2"/></g>
<circle cx="92" cy="470.9" r="6.9" fill="none" stroke="#4a4a52" stroke-width="2.1"/><rect x="90.9" y="467.4" width="2.3" height="2.3" fill="#4a4a52"/><rect x="90.9" y="470.6" width="2.3" height="5.2" fill="#4a4a52"/>
<path d="M84 497.4 L86.6 493.2 H97.4 L100 497.4Z" fill="#4a4a52"/><path d="M85.8 497 V506.8 M98 497 V506.8" stroke="#4a4a52" stroke-width="1.8"/><g fill="#4a4a52"><rect x="88" y="500.3" width="2.4" height="2.3"/><rect x="88" y="504.2" width="2.4" height="2.5"/><rect x="93" y="504.2" width="2.5" height="2.5"/></g>
<rect x="85" y="522" width="9.3" height="9.3" fill="#4a4a52"/><rect x="86.8" y="525" width="3.2" height="1.5" fill="#fff"/><rect x="86.8" y="527.6" width="3.2" height="1.5" fill="#fff"/><rect x="96.3" y="521" width="3" height="15.4" fill="#4a4a52"/><rect x="84" y="533.4" width="15.3" height="3" fill="#4a4a52"/><g fill="#fff"><rect x="98.3" y="523.2" width="1.2" height="1.2"/><rect x="98.3" y="526" width="1.2" height="1.2"/><rect x="98.3" y="528.8" width="1.2" height="1.2"/><rect x="98.3" y="531.4" width="1.2" height="1.2"/><rect x="86" y="535.4" width="1.2" height="1.2"/><rect x="88.8" y="535.4" width="1.2" height="1.2"/><rect x="91.6" y="535.4" width="1.2" height="1.2"/><rect x="94.4" y="535.4" width="1.2" height="1.2"/></g>
<path d="M88 563.9 H85.1 V551.9 H97.8 V557.6" fill="none" stroke="#4a4a52" stroke-width="1.8"/><rect x="89" y="552.5" width="3.8" height="2.3" fill="#4a4a52"/><g fill="none" stroke="#4a4a52" stroke-width="1.7"><path d="M93.8 560.8 H91 V564.8 H93.8"/><path d="M96.3 560.8 H99.1 V564.8 H96.3"/></g><rect x="93.2" y="562.2" width="3.6" height="1.3" fill="#4a4a52"/>
<path d="M92.5 580.5 H99 V587 L90.5 595.2 L84 588.7Z" fill="#4a4a52" stroke="#4a4a52" stroke-width="1" stroke-linejoin="round"/><circle cx="96" cy="583.5" r="1.3" fill="#fff"/>
<g fill="none" stroke="#4a4a52" stroke-width="1.8" stroke-linejoin="round"><path d="M90.3 610.3000000000001 H85.39999999999999 V623.1 H97.5 V618.5"/><path d="M96.3 608.4000000000001 V616.0 M92.39999999999999 612.4000000000001 H100.2"/></g><g fill="#4a4a52"><rect x="87.3" y="613.3000000000001" width="3.2" height="1.7"/><rect x="87.3" y="616.4000000000001" width="5.8" height="1.7"/><rect x="87.3" y="619.4000000000001" width="8" height="1.7"/></g>
<g stroke="#4a4a52" stroke-width="3.1"><path d="M92 637.4 V652.6 M85.2 641 L98.8 649 M98.8 641 L85.2 649"/></g>
<path d="M84.5 667.2 H90.5 L92.5 669.5 H99.8 V681 H84.5Z" fill="#4a4a52"/>
<path d="M92 694.8 L96 699.8 H88Z" fill="#4a4a52"/><rect x="85" y="700" width="14" height="8.8" rx="1.2" fill="none" stroke="#4a4a52" stroke-width="2"/><rect x="88.2" y="703.2" width="7.6" height="2.5" fill="#4a4a52"/>
<text x="271" y="450" font-size="16.4" fill="#111" stroke="#111" stroke-width="0.05" text-anchor="start" textLength="84.5" lengthAdjust="spacingAndGlyphs" >Description</text>
<text x="323" y="688" font-size="11.0" fill="#1b1b1b" stroke="#1b1b1b" stroke-width="0.22" text-anchor="middle" textLength="52" lengthAdjust="spacingAndGlyphs" >Edit HTML</text>
<text x="408.75" y="688" font-size="11.0" fill="#1b1b1b" stroke="#1b1b1b" stroke-width="0.22" text-anchor="start" textLength="108.2" lengthAdjust="spacingAndGlyphs" >Raw HTML edit mode</text>
<path transform="translate(546.15 676.25) scale(0.6458)" d="M22.2819 9.8211a5.9847 5.9847 0 0 0-.5157-4.9108 6.0462 6.0462 0 0 0-6.5098-2.9A6.0651 6.0651 0 0 0 4.9807 4.1818a5.9847 5.9847 0 0 0-3.9977 2.9 6.0462 6.0462 0 0 0 .7427 7.0966 5.98 5.98 0 0 0 .511 4.9107 6.051 6.051 0 0 0 6.5146 2.9001A5.9847 5.9847 0 0 0 13.2599 24a6.0557 6.0557 0 0 0 5.7718-4.2058 5.9894 5.9894 0 0 0 3.9977-2.9001 6.0557 6.0557 0 0 0-.7475-7.0729zm-9.022 12.6081a4.4755 4.4755 0 0 1-2.8764-1.0408l.1419-.0804 4.7783-2.7582a.7948.7948 0 0 0 .3927-.6813v-6.7369l2.02 1.1686a.071.071 0 0 1 .038.052v5.5826a4.504 4.504 0 0 1-4.4945 4.4944zm-9.6607-4.1254a4.4708 4.4708 0 0 1-.5346-3.0137l.142.0852 4.783 2.7582a.7712.7712 0 0 0 .7806 0l5.8428-3.3685v2.3324a.0804.0804 0 0 1-.0332.0615L9.74 19.9502a4.4992 4.4992 0 0 1-6.1408-1.6464zM2.3408 7.8956a4.485 4.485 0 0 1 2.3655-1.9728V11.6a.7664.7664 0 0 0 .3879.6765l5.8144 3.3543-2.0201 1.1685a.0757.0757 0 0 1-.071 0l-4.8303-2.7865A4.504 4.504 0 0 1 2.3408 7.872zm16.5963 3.8558L13.1038 8.364 15.1192 7.2a.0757.0757 0 0 1 .071 0l4.8303 2.7913a4.4944 4.4944 0 0 1-.6765 8.1042v-5.6772a.79.79 0 0 0-.407-.667zm2.0107-3.0231l-.142-.0852-4.7735-2.7818a.7759.7759 0 0 0-.7854 0L9.409 9.2297V6.8974a.0662.0662 0 0 1 .0284-.0615l4.8303-2.7866a4.4992 4.4992 0 0 1 6.6802 4.66zM8.3065 12.863l-2.02-1.1638a.0804.0804 0 0 1-.038-.0567V6.0742a4.4992 4.4992 0 0 1 7.3757-3.4537l-.142.0805L8.704 5.459a.7948.7948 0 0 0-.3927.6813zm1.0976-2.3654l2.602-1.4998 2.6069 1.4998v2.9994l-2.5974 1.5-2.6067-1.5Z" fill="#1e1e1e" stroke="#1e1e1e" stroke-width="0.46"/>
<text x="567.7" y="688" font-size="11.0" fill="#1b1b1b" stroke="#1b1b1b" stroke-width="0.22" text-anchor="start" textLength="42.6" lengthAdjust="spacingAndGlyphs" >ChatGPT</text>
</svg>
</body></html>
